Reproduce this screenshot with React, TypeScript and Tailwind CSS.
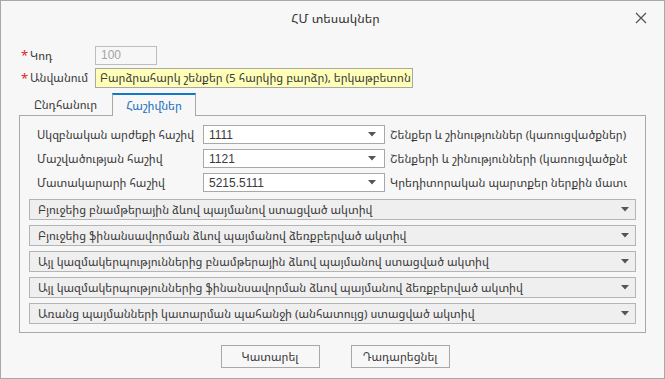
import React from "react";

const Caret = () => (
  <svg width="8" height="5" viewBox="0 0 8 5" className="shrink-0">
    <path d="M0 0 L8 0 L4 4.5 Z" fill="#555" />
  </svg>
);

const Cross = () => (
  <svg width="12" height="12" viewBox="0 0 12 12">
    <path d="M1 1 L11 11 M11 1 L1 11" stroke="#555" strokeWidth="1.3" />
  </svg>
);

const accountRows = [
  { label: "Սկզբնական արժեքի հաշիվ", value: "1111", desc: "Շենքեր և շինություններ (կառուցվածքներ)" },
  { label: "Մաշվածության հաշիվ", value: "1121", desc: "Շենքերի և շինությունների (կառուցվածքների)" },
  { label: "Մատակարարի հաշիվ", value: "5215.5111", desc: "Կրեդիտորական պարտքեր ներքին մատակարարներին" },
];

const selects = [
  "Բյուջեից բնամթերային ձևով պայմանով ստացված ակտիվ",
  "Բյուջեից ֆինանսավորման ձևով պայմանով ձեռքբերված ակտիվ",
  "Այլ կազմակերպություններից բնամթերային ձևով պայմանով ստացված ակտիվ",
  "Այլ կազմակերպություններից ֆինանսավորման ձևով պայմանով ձեռքբերված ակտիվ",
  "Առանց պայմանների կատարման պահանջի (անհատույց) ստացված ակտիվ",
];

export default function App() {
  return (
    <div
      className="w-[665px] h-[379px] bg-[#f7f7f7] border border-[#a8a8a8] flex flex-col text-[11.5px] text-[#3a3a3a] overflow-hidden"
      style={{ fontFamily: '"Noto Sans Armenian", "DejaVu Sans Condensed", "DejaVu Sans", sans-serif' }}
    >
      {/* title */}
      <div className="h-[36px] flex items-center relative shrink-0">
        <div className="flex-1 text-center text-[12.5px] pl-[6px] text-[#333]">ՀՄ տեսակներ</div>
        <div className="absolute right-[17px] top-[11px]">
          <Cross />
        </div>
      </div>

      {/* form fields */}
      <div className="flex flex-col gap-[3px] pl-[20px] pt-[9px]">
        <div className="flex items-center h-[19px]">
          <span className="text-[#e0262a] w-[8px] text-[13px] leading-none">*</span>
          <span className="w-[66px] pl-[1px]">Կոդ</span>
          <div className="w-[62px] h-[19px] border border-[#bdbdbd] bg-[#f7f7f7] text-[#a5a5a5] text-[12px] pl-[5px] leading-[17px]" style={{ fontFamily: '"Liberation Sans", sans-serif' }}>
            100
          </div>
        </div>
        <div className="flex items-center h-[20px]">
          <span className="text-[#e0262a] w-[8px] text-[13px] leading-none">*</span>
          <span className="w-[66px] pl-[1px]">Անվանում</span>
          <div className="w-[318px] h-[20px] border border-[#a8a8a8] bg-[#ffffb8] pl-[4px] leading-[18px] whitespace-nowrap overflow-hidden">
            Բարձրահարկ շենքեր (5 հարկից բարձր), երկաթբետոն
          </div>
        </div>
      </div>

      {/* tabs */}
      <div className="flex pl-[18px] mt-[5px] h-[23px] items-end">
        <div className="h-[22px] w-[93px] flex items-center justify-center border-b border-[#a8a8a8]">Ընդհանուր</div>
        <div className="h-[23px] w-[84px] flex items-center justify-center border-t-[2px] border-t-[#1478c8] border-x border-x-[#a8a8a8] text-[#1a6fc0] bg-[#f7f7f7]">
          Հաշիվներ
        </div>
        <div className="flex-1 mr-[18px] h-[1px] bg-[#a8a8a8]" />
      </div>

      {/* panel */}
      <div className="ml-[18px] mr-[18px] border-x border-b border-[#a8a8a8] h-[217px] flex flex-col pt-[9px] px-[9px]">
        <div className="flex flex-col gap-[5px]">
          {accountRows.map((r) => (
            <div key={r.value} className="flex items-center h-[19px]">
              <span className="w-[174px] pl-[8px] whitespace-nowrap overflow-hidden">{r.label}</span>
              <div className="w-[182px] h-[19px] border border-[#a8a8a8] bg-white flex items-center pl-[5px] pr-[8px] text-[12px]" style={{ fontFamily: '"Liberation Sans", sans-serif' }}>
                <span className="flex-1">{r.value}</span>
                <Caret />
              </div>
              <span className="ml-[5px] whitespace-nowrap overflow-hidden w-[237px]">{r.desc}</span>
            </div>
          ))}
        </div>
        <div className="flex flex-col gap-[5px] mt-[7px]">
          {selects.map((s) => (
            <div key={s} className="h-[21px] border border-[#b4b4b4] bg-[#efefef] flex items-center pl-[8px] pr-[6px]">
              <span className="flex-1 whitespace-nowrap overflow-hidden">{s}</span>
              <Caret />
            </div>
          ))}
        </div>
      </div>

      {/* footer */}
      <div className="flex justify-center gap-[31px] mt-[12px] pl-[5px]">
        <div className="w-[99px] h-[23px] border border-[#a8a8a8] bg-[#f7f7f7] flex items-center justify-center">Կատարել</div>
        <div className="w-[99px] h-[23px] border border-[#a8a8a8] bg-[#f7f7f7] flex items-center justify-center">Դադարեցնել</div>
      </div>
    </div>
  );
}
